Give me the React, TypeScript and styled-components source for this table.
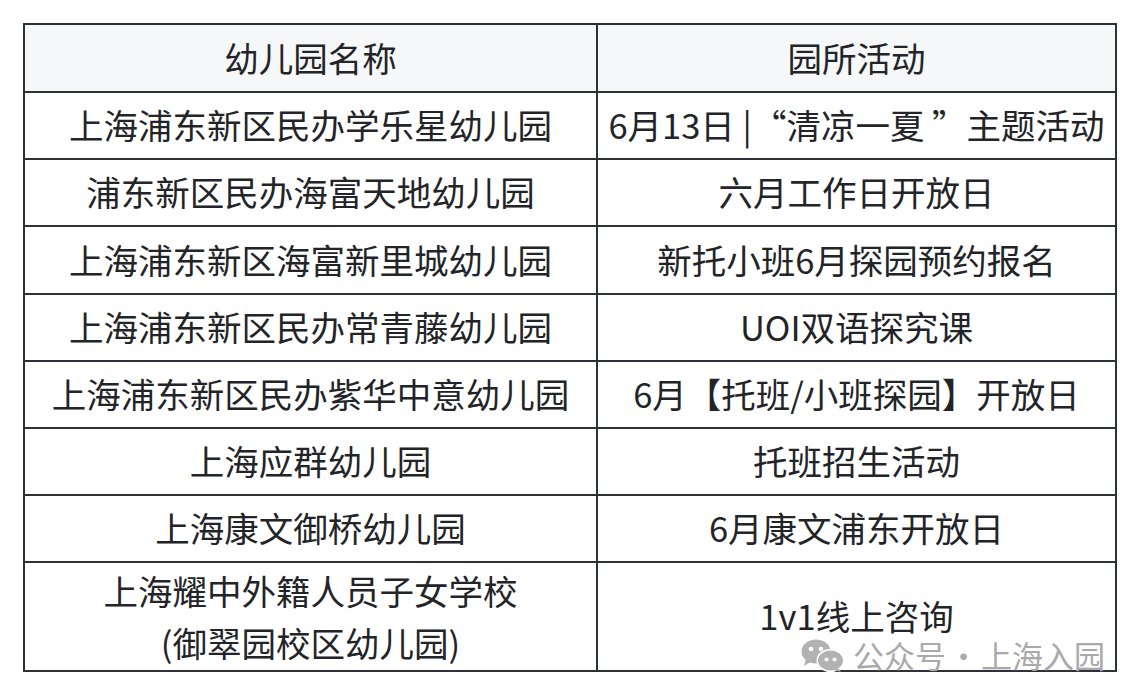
import React from "react";
import styled, { createGlobalStyle } from "styled-components";

const GlobalStyle = createGlobalStyle`
  html, body { margin: 0; padding: 0; background: #ffffff; }
  body { font-family: "Noto Sans CJK SC", "Noto Sans", sans-serif; }
`;

const Page = styled.div`
  padding: 23px 0 0 23px;
  width: 1142px;
  height: 700px;
  box-sizing: border-box;
`;

const Frame = styled.div`
  position: relative;
  width: 1092px;
`;

const Table = styled.table`
  width: 1092px;
  border-collapse: collapse;
  border: 2px solid #2e3136;
  table-layout: fixed;
`;

const HeadCell = styled.th<{ $w: number }>`
  width: ${(p) => p.$w}px;
  background: #f6f7f9;
  border: 2px solid #2e3136;
  padding: 12px 0 13px;
  font-weight: 400;
  font-size: 34.5px;
  line-height: 41px;
  color: #222428;
  text-align: center;
`;

const Cell = styled.td<{ $tight?: boolean }>`
  border: 2px solid #2e3136;
  padding: ${(p) => (p.$tight ? "0.5px 0 2.5px" : "11.2px 0 13px")};
  font-size: 34.5px;
  line-height: ${(p) => (p.$tight ? "52px" : "41px")};
  color: #222428;
  text-align: center;
  white-space: nowrap;
`;

const Watermark = styled.div`
  position: absolute;
  right: 10px;
  bottom: 0px;
  display: flex;
  align-items: center;
  color: #a9a9a9;
  font-size: 31px;
  line-height: 34px;
  pointer-events: none;
`;

const Dot = styled.span`
  display: inline-block;
  width: 35px;
  text-align: center;
`;

const IconWrap = styled.span`
  display: flex;
  margin-right: 8px;
`;

const WeChatIcon = () => (
  <svg width="44" height="33" viewBox="0 0 44 33">
    <ellipse cx="15" cy="12.5" rx="14.5" ry="12" fill="#b2b2b2" />
    <path d="M5 20 L3 27 L11 22 Z" fill="#b2b2b2" />
    <circle cx="10" cy="10" r="2.3" fill="#fff" />
    <circle cx="20" cy="10" r="2.3" fill="#fff" />
    <ellipse cx="29.5" cy="21.5" rx="14" ry="11.5" fill="#fff" />
    <ellipse cx="29.5" cy="21.5" rx="12.5" ry="10" fill="#b2b2b2" />
    <path d="M36 28 L40 33 L31 30.5 Z" fill="#b2b2b2" />
    <circle cx="25.5" cy="20.5" r="2" fill="#fff" />
    <circle cx="33.5" cy="20.5" r="2" fill="#fff" />
  </svg>
);

const rows: [string, string][] = [
  ["上海浦东新区民办学乐星幼儿园", "6月13日 |“清凉一夏 ”主题活动"],
  ["浦东新区民办海富天地幼儿园", "六月工作日开放日"],
  ["上海浦东新区海富新里城幼儿园", "新托小班6月探园预约报名"],
  ["上海浦东新区民办常青藤幼儿园", "UOI双语探究课"],
  ["上海浦东新区民办紫华中意幼儿园", "6月【托班/小班探园】开放日"],
  ["上海应群幼儿园", "托班招生活动"],
  ["上海康文御桥幼儿园", "6月康文浦东开放日"],
];

export default function App() {
  return (
    <Page>
      <GlobalStyle />
      <Frame>
        <Table>
          <thead>
            <tr>
              <HeadCell $w={571}>幼儿园名称</HeadCell>
              <HeadCell $w={517}>园所活动</HeadCell>
            </tr>
          </thead>
          <tbody>
            {rows.map(([a, b]) => (
              <tr key={a}>
                <Cell>{a}</Cell>
                <Cell>{b}</Cell>
              </tr>
            ))}
            <tr>
              <Cell $tight>
                上海耀中外籍人员子女学校
                <br />
                (御翠园校区幼儿园)
              </Cell>
              <Cell>1v1线上咨询</Cell>
            </tr>
          </tbody>
        </Table>
        <Watermark>
          <IconWrap>
            <WeChatIcon />
          </IconWrap>
          <span>公众号</span>
          <Dot>·</Dot>
          <span>上海入园</span>
        </Watermark>
      </Frame>
    </Page>
  );
}
